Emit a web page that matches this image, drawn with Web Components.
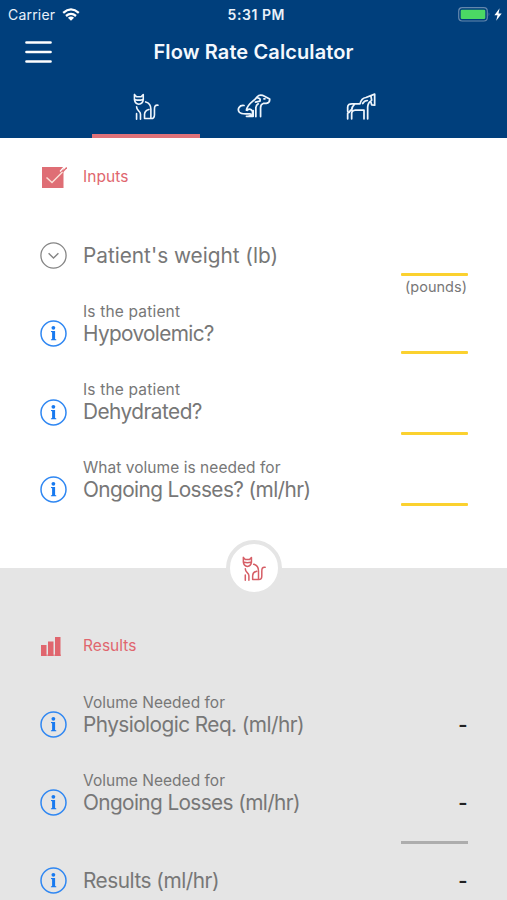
<!DOCTYPE html>
<html lang="en">
<head>
<meta charset="utf-8">
<title>Flow Rate Calculator</title>
<style>
body { margin: 0; width: 507px; height: 900px; overflow: hidden; background: #fff; font-family: Inter, "Liberation Sans", sans-serif; }
</style>
</head>
<body>
<flow-app></flow-app>
<script>
const define = (name, html, ready) => {
  const t = document.createElement('template');
  t.innerHTML = html;
  customElements.define(name, class extends HTMLElement {
    connectedCallback() {
      if (this.shadowRoot) return;
      this.attachShadow({ mode: 'open' }).append(t.content.cloneNode(true));
      if (ready) ready.call(this, this.shadowRoot);
    }
  });
};

/* One line of text, tracked so that it fills the width given in px. */
define('fit-text', `<style>
:host { display: block; white-space: nowrap; }
span { display: inline-block; }
</style><span><slot></slot></span>`, function (root) {
  const span = root.querySelector('span');
  const target = parseFloat(this.getAttribute('w'));
  const n = this.textContent.length;
  const natural = span.getBoundingClientRect().width;
  if (target && n > 1) {
    const ls = (target - natural) / (n - 1);
    span.style.letterSpacing = ls + 'px';
    span.style.marginRight = -ls + 'px';
  }
});

const ICONS = {
  cat: ['158 38 80 82', 5, '<path d="M162.500 42V58Q164 71 176 72Q188 71 189.500 58V42L183 49H169ZM165 58Q176 61 187 58M197 65Q213 69 213 87V115M235 75C226 74 224 78 224 88V104Q224 116 214 116H193.500V103Q194 91 207 88M169 80C169 94 181 91 181 103V118M169 101V118"/>'],
  dog: ['51 40 101 74', 5.2, '<path d="M72 77C58 75 51 88 58 97C65 105 80 101 90 102M79 91C82 70 101 66 111 51Q119 42 134 50L148 58Q149 69 138 71H129Q121 73 121 84V110M81 91C90 84 99 91 97 101Q94 110 79 109M99 92V109H82M107 110V83Q108 76 114 72M112 54Q122 55 119 64L106 67M131 57H134"/>'],
  horse: ['380 40 90 80', 5.2, '<path d="M400 72Q385 71 385 82V94M385 101V117M399 72H422Q426 55 440 53L466 43V76L457 75L454 64Q446 68 445 82V117M434 117V91H408Q397 92 397 101V117M406 73Q397 81 397 91M430 71Q435 62 444 62M455 50L457 61M385 100Q391 98 394 91"/>'],
};
define('animal-icon', `<style>
:host { display: block; }
svg { display: block; width: 100%; height: 100%; }
</style><svg fill="none" stroke="currentColor" stroke-linecap="round" stroke-linejoin="round"></svg>`, function (root) {
  const [box, width, shape] = ICONS[this.getAttribute('name')];
  const svg = root.querySelector('svg');
  svg.setAttribute('viewBox', box);
  svg.setAttribute('stroke-width', width);
  svg.innerHTML = shape;
});

define('status-bar', `<style>
:host { display: grid; grid-template-columns: 1fr auto 1fr; align-items: center; height: 27px; padding: 0 5px 0 8px; color: #e9f1fa; font-size: 14px; line-height: 27px; }
.side { display: flex; align-items: center; gap: 7px; }
.end { justify-content: flex-end; gap: 3px; }
.time { font-weight: 600; font-size: 14px; padding: 1px 0 0 2px; }
svg { display: block; }
</style>
<div class="side"><fit-text w="47">Carrier</fit-text>
<svg width="18" height="13" viewBox="0 0 18 13" fill="none" stroke="#fff" stroke-width="2.300"><path d="M1.200 4.800Q9-2 16.800 4.800M4 8Q9 3.800 14 8"/><path d="M9 12.800L5.900 9.700Q9 7.200 12.100 9.700Z" fill="#fff" stroke="none"/></svg></div>
<fit-text class="time" w="57">5:31 PM</fit-text>
<div class="side end">
<svg width="33" height="15" viewBox="0 0 33 15"><rect x=".7" y=".7" width="28.600" height="13.300" rx="3.500" fill="none" stroke="#6387ad" stroke-width="1.200"/><rect x="2.700" y="2.700" width="24.600" height="9.300" rx="1.300" fill="#4bd964"/><path d="M30.700 5.200Q32.300 7.300 30.700 9.400Z" fill="#6387ad"/></svg>
<svg width="8" height="13" viewBox="0 0 8 13"><path d="M5.600.3L.4 7.300H3.500L2.200 12.700L7.700 5.500H4.500Z" fill="#fff"/></svg></div>`);

define('animal-tab', `<style>
:host { display: flex; justify-content: center; align-items: flex-start; box-sizing: border-box; width: 107.500px; height: 60px; padding-top: 15px; border-bottom: 4px solid transparent; color: #eef5fc; }
:host([active]) { border-color: #df7279; }
</style><slot></slot>`);

define('app-header', `<style>
:host { display: flex; flex-direction: column; height: 137.500px; background: #003f7c; color: #fff; }
.bar { display: grid; grid-template-columns: 26px 1fr 26px; align-items: center; height: 50px; padding: 0 25px; }
.title { justify-self: center; padding-top: 1px; font-size: 20px; font-weight: 600; line-height: 49px; color: #f4f8fd; }
.tabs { display: flex; justify-content: center; padding-top: .5px; }
.cat { width: 26px; height: 27px; }
.dog { width: 34px; height: 25px; }
.horse { width: 30px; height: 27px; }
</style>
<status-bar></status-bar>
<div class="bar"><svg width="27" height="24" viewBox="0 0 27 24" stroke="#fff" stroke-width="2.700" stroke-linecap="round"><path d="M1.500 2.500H25.500M1.500 12H25.500M1.500 21.500H25.500"/></svg>
<fit-text class="title" w="200">Flow Rate Calculator</fit-text></div>
<div class="tabs">
<animal-tab active><animal-icon class="cat" name="cat"></animal-icon></animal-tab>
<animal-tab><animal-icon class="dog" name="dog"></animal-icon></animal-tab>
<animal-tab><animal-icon class="horse" name="horse"></animal-icon></animal-tab>
</div>`);

define('section-title', `<style>
:host { display: grid; grid-template-columns: 27px auto; column-gap: 16px; align-items: center; height: 30px; padding-left: 40px; color: #e0666e; font-size: 15.500px; line-height: 30px; }
</style><slot name="icon"></slot><slot></slot>`);

define('round-icon', `<style>
:host { display: block; width: 27px; height: 27px; }
svg { display: block; }
</style><svg width="27" height="27" viewBox="0 0 27 27" fill="none"></svg>`, function (root) {
  root.querySelector('svg').innerHTML = this.getAttribute('kind') === 'toggle'
    ? '<circle cx="13.500" cy="13.500" r="12.600" stroke="#858585" stroke-width="1.300"/><path d="M8.600 11.300L13.500 16L18.400 11.300" stroke="#858585" stroke-width="1.400"/>'
    : '<circle cx="13.500" cy="13.500" r="12.500" stroke="#2f87f2" stroke-width="1.500"/><circle cx="13.400" cy="7.800" r="1.900" fill="#187af0"/><path d="M11 11.100H15.100V18.900L16.300 19.400V20.300H10.900V19.400L12.100 18.900V12.300L11 12Z" fill="#187af0"/>';
});

define('calc-row', `<style>
:host { display: grid; grid-template-columns: 27px 1fr 67px; column-gap: 16px; box-sizing: border-box; height: 78px; padding: 0 39px 0 40px; color: #777; }
.icon { padding-top: var(--icon, 26px); }
.text { display: flex; flex-direction: column; }
.small { height: 28px; padding-top: 8px; box-sizing: border-box; font-size: 15.500px; line-height: 20px; }
.big { font-size: 20.800px; line-height: 24px; }
.value { display: flex; flex-direction: column; }
</style>
<div class="icon"><slot name="icon"></slot></div>
<div class="text"><div class="small"><slot name="small"></slot></div><div class="big"><slot></slot></div></div>
<div class="value"><slot name="value"></slot></div>`);

define('value-field', `<style>
:host { display: flex; flex-direction: column; padding-top: var(--line, 57px); }
.line { height: 2.500px; background: #fbd12f; border-radius: 1px; }
.unit { align-self: flex-end; padding-right: 1px; font-size: 14.500px; line-height: 22px; }
</style><div class="line"></div><div class="unit"><slot></slot></div>`);

define('result-value', `<style>
:host { display: flex; flex-direction: column; height: 78px; color: #222; font-size: 20px; font-weight: 600; line-height: 24px; }
.rule { height: 3px; }
:host([total]) .rule { background: #adadad; }
.num { padding: 25px .5px 0 0; text-align: right; }
</style><div class="rule"></div><div class="num"><slot></slot></div>`);

define('flow-app', `<style>
:host { display: flex; flex-direction: column; height: 900px; }
.inputs { flex: none; height: 430.500px; box-sizing: border-box; padding-top: 24.500px; background: #fff; position: relative; }
.rows { padding-top: 24px; }
.results { flex: 1; background: #e5e5e5; padding-top: 63px; overflow: hidden; }
.badge { position: absolute; z-index: 1; left: 226px; bottom: -28px; width: 48px; height: 48px; border: 4px solid #e5e5e5; border-radius: 50%; background: #fff; display: grid; place-items: center; color: #d65e66; }
.badge animal-icon { width: 24px; height: 25px; }
svg { display: block; }
</style>
<app-header></app-header>
<div class="inputs">
<section-title><svg slot="icon" width="27" height="24" viewBox="0 0 27 24"><rect x="2" y="2" width="21.500" height="21" fill="#df6e75"/><path d="M6.500 12.500L12 17.500L23.500 6" fill="none" stroke="#fbe0d8" stroke-width="1.500"/><path d="M20 6.500L24 2" stroke="#fff" stroke-width="1.200"/><path d="M22.500 7L26.800 2.500" stroke="#df6e75" stroke-width="1.400"/></svg><fit-text w="45.500">Inputs</fit-text></section-title>
<div class="rows">
<calc-row style="--icon:25.500px"><round-icon slot="icon" kind="toggle"></round-icon><fit-text w="195">Patient's weight (lb)</fit-text><value-field slot="value"><fit-text w="62">(pounds)</fit-text></value-field></calc-row>
<calc-row><round-icon slot="icon"></round-icon><fit-text slot="small" w="97">Is the patient</fit-text><fit-text w="131.500">Hypovolemic?</fit-text><value-field slot="value"></value-field></calc-row>
<calc-row style="--icon:27px"><round-icon slot="icon"></round-icon><fit-text slot="small" w="97">Is the patient</fit-text><fit-text w="119.500">Dehydrated?</fit-text><value-field slot="value" style="--line:60px"></value-field></calc-row>
<calc-row><round-icon slot="icon"></round-icon><fit-text slot="small" w="197.500">What volume is needed for</fit-text><fit-text w="228">Ongoing Losses? (ml/hr)</fit-text><value-field slot="value" style="--line:53px"></value-field></calc-row>
</div>
<div class="badge"><animal-icon name="cat"></animal-icon></div>
</div>
<div class="results">
<section-title><svg slot="icon" width="27" height="24" viewBox="0 0 27 24" fill="#e0666e"><path d="M1 11H6.500V22H1ZM8 7.500H13.500V22H8ZM15 3H20.500V22H15Z"/><path d="M1 20.500H21V22H1Z" opacity=".6"/></svg><fit-text w="53.500">Results</fit-text></section-title>
<div class="rows">
<calc-row><round-icon slot="icon"></round-icon><fit-text slot="small" w="142">Volume Needed for</fit-text><fit-text w="221.500">Physiologic Req. (ml/hr)</fit-text><result-value slot="value">-</result-value></calc-row>
<calc-row><round-icon slot="icon"></round-icon><fit-text slot="small" w="142">Volume Needed for</fit-text><fit-text w="217.500">Ongoing Losses (ml/hr)</fit-text><result-value slot="value">-</result-value></calc-row>
<calc-row><round-icon slot="icon"></round-icon><fit-text w="136.500">Results (ml/hr)</fit-text><result-value slot="value" total>-</result-value></calc-row>
</div>
</div>`);
</script>
</body>
</html>
